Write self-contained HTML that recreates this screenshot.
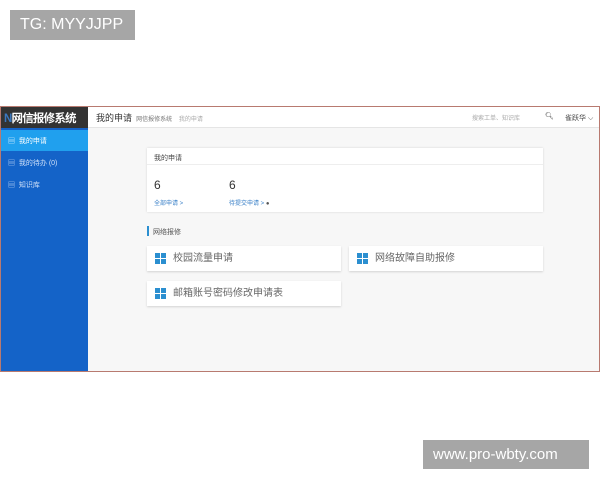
<!DOCTYPE html>
<html><head><meta charset="utf-8"><style>
*{margin:0;padding:0;box-sizing:border-box}
body{width:600px;height:480px;background:#fff;position:relative;overflow:hidden;font-family:"Liberation Sans","Noto Sans CJK SC",sans-serif}
.a{position:absolute}
.wm{background:#a6a6a6;color:#fff;font-size:16px;line-height:30px;padding-left:10px}
.tile{position:absolute;background:#fff;box-shadow:0 1px 2px rgba(0,0,0,.15);font-size:10px;color:#666;line-height:25px;padding-left:26px}
.tile i{position:absolute;left:8px;top:7px;width:11px;height:11px;background:#2b8fd0}
.tile i:before{content:"";position:absolute;left:5px;top:0;width:1px;height:11px;background:#fff}
.tile i:after{content:"";position:absolute;top:5px;left:0;height:1px;width:11px;background:#fff}
</style></head><body>
<div class="a wm" style="left:10px;top:10px;width:125px;height:30px">TG: MYYJJPP</div>
<div class="a wm" style="left:423px;top:440px;width:166px;height:29px;font-size:15px">www.pro-wbty.com</div>

<div class="a" style="left:0;top:106px;width:600px;height:266px;border:1px solid #b87a70;background:#f7f7f7"></div>
<div class="a" style="left:1px;top:107px;width:87px;height:21px;background:#333"></div>
<div class="a" style="left:4px;top:110px;color:#fff;font-size:11.5px;font-weight:bold;letter-spacing:-0.8px;white-space:nowrap"><span style="color:#3a78c0">N</span>网信报修系统</div>
<div class="a" style="left:1px;top:128px;width:87px;height:243px;background:#1463c8"></div>
<div class="a" style="left:1px;top:130px;width:87px;height:21px;background:#20a0ee"></div>
<div class="a" style="left:8px;top:136px;font-size:7px;color:#fff">▤&nbsp; 我的申请</div>
<div class="a" style="left:8px;top:158px;font-size:7px;color:#cfe0f8">▤&nbsp; 我的待办 (0)</div>
<div class="a" style="left:8px;top:180px;font-size:7px;color:#cfe0f8">▤&nbsp; 知识库</div>

<div class="a" style="left:88px;top:107px;width:511px;height:21px;background:#fff;border-bottom:1px solid #e5e5e5"></div>
<div class="a" style="left:96px;top:111px;font-size:9px;color:#333">我的申请 <span style="font-size:6px;color:#777">&nbsp;网信报修系统 &nbsp;&nbsp;&nbsp;<span style="color:#aaa">我的申请</span></span></div>
<div class="a" style="left:472px;top:113px;font-size:6px;color:#aaa">搜索工单、知识库</div>
<div class="a" style="left:545px;top:112px;font-size:7px;color:#444">&#x1F50D;&#xFE0E;</div>
<div class="a" style="left:565px;top:113px;font-size:7px;color:#444">雀跃华 ⌵</div>

<div class="a" style="left:147px;top:148px;width:396px;height:64px;background:#fff;box-shadow:0 0 2px rgba(0,0,0,.15)"></div>
<div class="a" style="left:147px;top:164px;width:396px;height:1px;background:#eee"></div>
<div class="a" style="left:154px;top:153px;font-size:7px;color:#444">我的申请</div>
<div class="a" style="left:154px;top:178px;font-size:12px;color:#333">6</div>
<div class="a" style="left:229px;top:178px;font-size:12px;color:#333">6</div>
<div class="a" style="left:154px;top:198px;font-size:6px;color:#3a80c8">全部申请 &gt;</div>
<div class="a" style="left:229px;top:198px;font-size:6px;color:#3a80c8">待提交申请 &gt; <span style="color:#555">●</span></div>

<div class="a" style="left:147px;top:226px;width:2px;height:10px;background:#2b8fd0"></div>
<div class="a" style="left:153px;top:227px;font-size:7px;color:#555">网络报修</div>
<div class="tile" style="left:147px;top:246px;width:194px;height:25px">校园流量申请<i></i></div>
<div class="tile" style="left:349px;top:246px;width:194px;height:25px">网络故障自助报修<i></i></div>
<div class="tile" style="left:147px;top:281px;width:194px;height:25px">邮箱账号密码修改申请表<i></i></div>
</body></html>
